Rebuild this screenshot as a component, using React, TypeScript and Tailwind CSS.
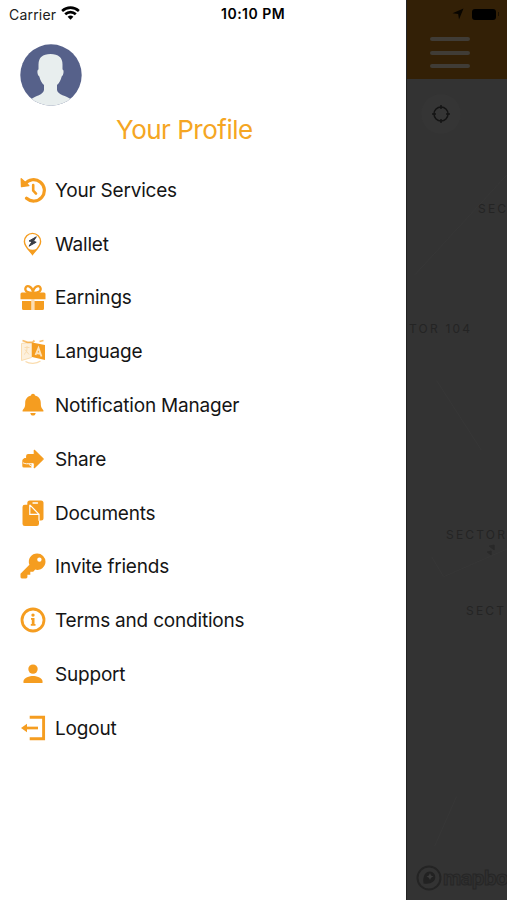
import React from 'react';

interface MenuItem {
  label: string;
  icon: React.ReactNode;
}

interface MapLabel {
  text: string;
  position: string;
}

const menuItems: MenuItem[] = [
  {
    label: 'Your Services',
    icon: (
      <>
        <path d="M4.500 6.500A10.700 10.700 0 1 1 6 20.800" fill="none" stroke="currentColor" strokeWidth="3.200" strokeLinecap="round" />
        <path d="M.7 1.200 8.300 8 1 9.200Z" fill="currentColor" stroke="currentColor" strokeWidth="1.300" strokeLinejoin="round" />
        <path d="M12.700 7.500v5.600l2.800 3" fill="none" stroke="currentColor" strokeWidth="2.600" strokeLinecap="round" />
      </>
    ),
  },
  {
    label: 'Wallet',
    icon: (
      <>
        <path d="M12 22.800C10 19.500 3.900 15.500 3.900 10a8.100 8.100 0 0 1 16.200 0c0 5.500-6.100 9.500-8.100 12.800Z" fill="#fff" stroke="currentColor" strokeWidth="1.400" />
        <path d="M7.500 17.200c3 1.300 6 1.300 9 0L12 23.300Z" fill="currentColor" />
        <path d="m15.800 5.300-7.300 4.200 3 .6-3 4.600 7.200-4-2.800-.9Z" fill="#3a3d45" stroke="#3a3d45" strokeWidth="1" />
      </>
    ),
  },
  {
    label: 'Earnings',
    icon: (
      <>
        <path d="M12.500 8.500C7 8.500 4.300 6.500 4.900 3.800c1-3.400 6-3 7.600 3.200 1.600-6.200 6.600-6.600 7.600-3.200.6 2.700-2.100 4.700-7.600 4.700Z" fill="none" stroke="currentColor" strokeWidth="2.300" />
        <path d="M1.500 8h22q1.500 0 1.500 1.500V14.800H0V9.500Q0 8 1.500 8ZM1.500 16.500h9.300v9H3q-1.500 0-1.500-1.500ZM14 16.500h9.500V24q0 1.500-1.500 1.500h-8Z" fill="currentColor" />
        <path d="M10.800 14.800H14v10.700h-3.200Z" fill="currentColor" opacity=".35" />
      </>
    ),
  },
  {
    label: 'Language',
    icon: (
      <>
        <path d="m1 5 10-1.300V19L1 22Z" fill="#fdf0dc" stroke="#fadcae" />
        <path d="m2 2 5 1.800h5L14 2M19 3l4-1" fill="none" stroke="currentColor" strokeWidth="1.800" opacity=".65" />
        <path d="M11.500 4 24.500 6.500v15l-13-3Z" fill="currentColor" />
        <path d="m15 16.500 3-7 3 8.500m-5-3.500 4 .8" fill="none" stroke="#fde3bb" strokeWidth="1.800" />
        <path d="M4 9h5M6.500 7.500V9c0 4-1 5.500-3 7m1-5 4 5" fill="none" stroke="#fadcae" />
        <path d="M5 23c4 2.500 11 2.500 15-.5" fill="none" stroke="#fadcae" strokeWidth="1.300" />
      </>
    ),
  },
  {
    label: 'Notification Manager',
    icon: (
      <path d="M12.500 1.300c1.200 0 1.900.8 2 1.800 3.800.9 5.800 3.600 5.800 7.500 0 4.400 1 5.200 2.600 7.100v1.300H2.100v-1.300c1.600-1.900 2.600-2.700 2.600-7.100 0-3.900 2-6.600 5.800-7.500.1-1 .8-1.800 2-1.800ZM9.800 20.400h5.400c-.2 1.600-1.200 2.600-2.700 2.600s-2.500-1-2.700-2.600Z" fill="currentColor" />
    ),
  },
  {
    label: 'Share',
    icon: (
      <>
        <path d="M13.800 3.800 22.700 12.500 13.800 21.200v-4.800H6.200V9.500Q6.200 8 7.700 8h6.100Z" fill="currentColor" stroke="currentColor" strokeWidth="1.200" strokeLinejoin="round" />
        <path d="M6.500 11.500H4Q1.800 12.500 1.800 14v5.500Q1.800 21 3.300 21H11v-4H6.500Z" fill="currentColor" />
        <path d="M2.500 16.300c2.500 1.300 4.500 1 7 1l3-.1v3.300l-4-2.500" fill="none" stroke="#fff" strokeWidth=".9" />
      </>
    ),
  },
  {
    label: 'Documents',
    icon: (
      <>
        <path d="M9.300 0h11.200q2.500 0 2.500 2.500v15q0 2.500-2.500 2.500H6.800V2.500Q6.800 0 9.300 0Z" fill="currentColor" />
        <path d="M12.500 2.500h4.500" stroke="#fff" strokeWidth="1.300" strokeLinecap="round" />
        <path d="M4.300 4.300h5L18.500 14v9.200q0 2.300-2.300 2.300H4.300Q2 25.500 2 23.200V6.600q0-2.300 2.300-2.300Z" fill="currentColor" />
        <path d="M9.300 4.300v9.500h9.200v6.500M9.300 4.300l9.200 9.500" fill="none" stroke="#fff" strokeWidth="1.200" />
      </>
    ),
  },
  {
    label: 'Invite friends',
    icon: (
      <path
        fillRule="evenodd"
        d="M16.800 0A8.200 8.200 0 0 1 25 8.200a8.200 8.200 0 0 1-10.300 7.900l-2 2.200H9.800v2.900H6.900v2.400q0 1.400-1.400 1.400H1.400Q0 25 0 23.600v-3.300l8.900-9A8.200 8.200 0 0 1 16.800 0Zm2.100 3.900a2.200 2.200 0 1 0 0 4.400 2.200 2.200 0 0 0 0-4.400Z"
        fill="currentColor"
      />
    ),
  },
  {
    label: 'Terms and conditions',
    icon: (
      <>
        <circle cx="12.500" cy="12.500" r="11" fill="none" stroke="currentColor" strokeWidth="2.800" />
        <circle cx="12.500" cy="7.600" r="1.700" fill="currentColor" />
        <path d="M10.500 10.500h3.500v6h1v1.800h-4.700v-1.800h1v-4.200h-.8Z" fill="currentColor" />
      </>
    ),
  },
  {
    label: 'Support',
    icon: (
      <>
        <circle cx="12.500" cy="7.600" r="4.700" fill="currentColor" />
        <path d="M3 21.500v-1.700c0-3.800 6.300-5.400 9.500-5.400s9.500 1.600 9.500 5.400v1.700Z" fill="currentColor" />
      </>
    ),
  },
  {
    label: 'Logout',
    icon: (
      <>
        <path d="M9.200 1.800h13.900v21.500H9.200" fill="none" stroke="currentColor" strokeWidth="2.900" />
        <path d="M17.500 12.500H4" stroke="currentColor" strokeWidth="2.700" />
        <path d="m.5 12.500 6-4.300v8.600Z" fill="currentColor" />
      </>
    ),
  },
];

const mapLabels: MapLabel[] = [
  { text: 'SEC', position: 'left-[71px] top-[201px]' },
  { text: 'TOR 104', position: 'left-[2px] top-[321px]' },
  { text: 'SECTOR', position: 'left-[39px] top-[527px]' },
  { text: 'SECT', position: 'left-[59px] top-[603px]' },
];

const StatusBar: React.FC = () => (
  <div className="relative flex h-7 items-center pl-[9px] text-[#202020]">
    <span className="w-[47px] text-[14px] tracking-[0.2px]">Carrier</span>
    <svg className="ml-[5px] mt-[-2px] h-[14px] w-[19px]" viewBox="0 0 19 14" fill="none" stroke="#000" strokeWidth="2.6">
      <path d="M1.100 5C6 .5 13 .5 17.900 5" />
      <path d="M4.200 8.300c3-2.900 7.600-2.900 10.600 0" />
      <path d="m9.500 13.700-2.900-3q2.900-2.300 5.800 0Z" fill="#000" stroke="none" />
    </svg>
    <span className="absolute left-[221px] top-[3px] text-[14px] font-semibold tracking-[0.5px] text-black">10:10 PM</span>
  </div>
);

const Avatar: React.FC = () => (
  <svg className="h-[62px] w-[62px]" viewBox="0 0 62 62">
    <defs>
      <clipPath id="avatar">
        <circle cx="31" cy="31" r="30.700" />
      </clipPath>
    </defs>
    <g clipPath="url(#avatar)">
      <path d="M0 0h62v62H0Z" fill="#56618a" />
      <path
        d="M30.500 10c8 0 12 3.500 12 10.500v5c1.800 0 1.200 5.800-.8 7-1 4-2.500 6.500-4.700 8.500v5c1 5 9 5.500 14.500 9.500L55 62H7l3.500-6.500C16 51.500 23 51 24 46v-5c-2.200-2-3.700-4.500-4.700-8.500-2-1.200-2.600-7-.8-7v-5c0-7 4-10.500 12-10.500Z"
        fill="#e8eeee"
      />
    </g>
  </svg>
);

const SideMenu: React.FC = () => (
  <aside className="flex h-full w-[406px] shrink-0 flex-col bg-white">
    <StatusBar />
    <header className="flex h-[135px] flex-col pl-[20px] pt-[16px]">
      <Avatar />
      <h1 className="ml-[96px] mt-[6px] whitespace-nowrap text-[26px] leading-9 tracking-[-0.5px] text-[#f5a623]">Your Profile</h1>
    </header>
    <nav>
      <ul>
        {menuItems.map((item) => (
          <li key={item.label} className="flex h-[53.8px] items-center pl-[20px]">
            <svg className="h-[26px] w-[26px] shrink-0 text-[#f59d20]" viewBox="-.5 -.5 26 26">
              {item.icon}
            </svg>
            <span className="ml-[9px] whitespace-nowrap pt-[2.5px] text-[19px] tracking-[-0.2px] text-[#151515]">{item.label}</span>
          </li>
        ))}
      </ul>
    </nav>
  </aside>
);

const MapBackdrop: React.FC = () => (
  <main className="relative flex h-full flex-1 flex-col overflow-hidden border-l border-[#222] bg-[#333]">
    <div className="h-[79px] shrink-0 bg-[#332006]">
      <div className="flex h-7 items-center">
        <svg className="ml-[45px] h-3 w-3" viewBox="0 0 12 12">
          <path d="M11.500.5 7 11.500 6.200 6 .5 5.300Z" fill="#080500" />
        </svg>
        <span className="ml-[8px] h-[11px] w-[24px] rounded-[3px] bg-black" />
        <span className="ml-[2px] h-1 w-px bg-[#1a1002]" />
      </div>
      <div className="ml-[23px] mt-[9px] flex w-[40px] flex-col gap-[9.500px]">
        <span className="h-1 rounded-sm bg-[#403c36]" />
        <span className="h-1 rounded-sm bg-[#403c36]" />
        <span className="h-1 rounded-sm bg-[#403c36]" />
      </div>
    </div>
    <div className="ml-[14px] mt-[15px] flex h-10 w-10 items-center justify-center rounded-full bg-[#353535]">
      <svg className="h-5 w-5" viewBox="0 0 20 20" fill="none" stroke="#141414" strokeWidth="1.500">
        <circle cx="10" cy="10" r="7" />
        <path d="M10 1v4M10 15v4M1 10h4M15 10h4" />
      </svg>
    </div>
    <svg className="absolute inset-0 h-full w-full" viewBox="0 0 101 900" fill="none" stroke="#373737">
      <path d="M8 273 101 172M30 380 75 450M25 558l12 20 64-28M28 850l22-50" />
      <path d="m83 547 5-1v5Zm-2 6 4-1v4Z" stroke="#292929" fill="#292929" />
    </svg>
    {mapLabels.map((label) => (
      <span
        key={label.position}
        className={`absolute whitespace-nowrap text-[12px] leading-4 tracking-[2.2px] text-[#242424] ${label.position}`}
      >
        {label.text}
      </span>
    ))}
    <div className="absolute bottom-[8px] left-[8px] flex items-center">
      <svg className="h-[28px] w-[28px]" viewBox="0 0 28 28">
        <circle cx="14" cy="14" r="11.500" fill="none" stroke="#242424" strokeWidth="2" />
        <path d="M8.500 19.500c-1-8 2-12 6.500-12a5.500 5.500 0 0 1 5.300 5.500c0 4.500-4 7.500-11.800 6.500Z" fill="#222" />
        <path d="m15 9 1 2.500 2.500 1L16 13.700 15 16l-1.100-2.300-2.400-1.200 2.400-1Z" fill="#3b3b3b" />
      </svg>
      <span className="text-[20px] font-bold leading-7 tracking-[-0.5px] text-[#303030] [-webkit-text-stroke:1px_#262626]">mapbox</span>
    </div>
  </main>
);

const App: React.FC = () => {
  return (
    <div className="flex h-[900px] w-[507px] overflow-hidden bg-white font-['Inter','Liberation_Sans',sans-serif]">
      <SideMenu />
      <MapBackdrop />
    </div>
  );
};

export default App;
